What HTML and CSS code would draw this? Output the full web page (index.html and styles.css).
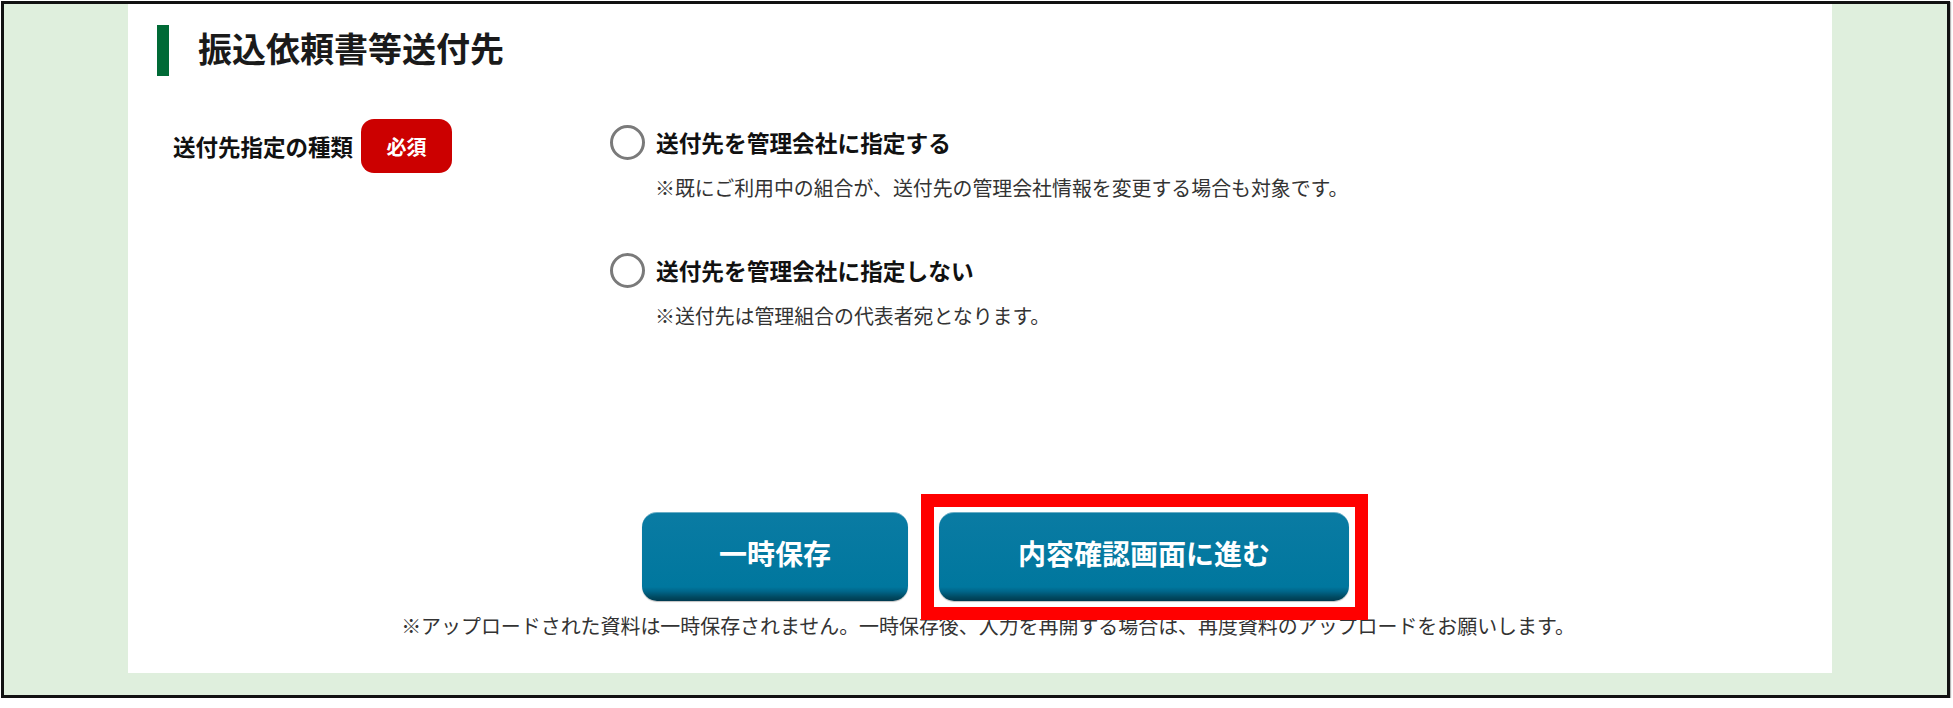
FILE: index.html
```html
<!DOCTYPE html>
<html lang="ja">
<head>
<meta charset="utf-8">
<title>振込依頼書等送付先</title>
<link rel="stylesheet" href="styles.css">
</head>
<body>
<div class="frame">
  <div class="panel">
    <h2 class="section-title"><span class="title-bar"></span><span class="title-text">振込依頼書等送付先</span></h2>

    <div class="form-row">
      <div class="field-label">
        <span class="label-text">送付先指定の種類</span>
        <span class="badge">必須</span>
      </div>
      <div class="options">
        <label class="option">
          <span class="radio"></span>
          <span class="option-text">送付先を管理会社に指定する</span>
        </label>
        <p class="option-note">※既にご利用中の組合が、送付先の管理会社情報を変更する場合も対象です。</p>
        <label class="option option-second">
          <span class="radio"></span>
          <span class="option-text">送付先を管理会社に指定しない</span>
        </label>
        <p class="option-note">※送付先は管理組合の代表者宛となります。</p>
      </div>
    </div>

    <div class="actions">
      <button class="btn btn-save" type="button">一時保存</button>
      <span class="highlight-wrap">
        <button class="btn btn-next" type="button">内容確認画面に進む</button>
        <span class="highlight"></span>
      </span>
    </div>
    <p class="footnote">※アップロードされた資料は一時保存されません。一時保存後、入力を再開する場合は、再度資料のアップロードをお願いします。</p>
  </div>
</div>
</body>
</html>
```

FILE: styles.css
```css
html, body {
  margin: 0;
  padding: 0;
  background: #ffffff;
}

body {
  font-family: "Noto Sans CJK JP", "Noto Sans", sans-serif;
  color: #1a1a1a;
}

.frame {
  box-sizing: border-box;
  margin: 1px 0 0 1px;
  width: 1949px;
  height: 697px;
  border: 3px solid #111;
  background: #dfefdd;
  box-shadow: 1px 1px 1px #b5b5b5;
  overflow: hidden;
}

.panel {
  box-sizing: border-box;
  margin-left: 124px;
  width: 1704px;
  height: 669px;
  background: #ffffff;
  padding-top: 21px;
}

.section-title {
  display: flex;
  align-items: center;
  margin: 0 0 0 29px;
  height: 51px;
  font-size: 34px;
  font-weight: 700;
  line-height: 51px;
  color: #1a1a1a;
}

.title-bar {
  width: 12px;
  height: 51px;
  background: #006a36;
  margin-right: 29px;
}

.title-text {
  position: relative;
  top: -3px;
}

.form-row {
  display: flex;
  margin-top: 43px;
  padding-left: 45px;
}

.field-label {
  display: flex;
  align-items: center;
  width: 437px;
  height: 54px;
}

.label-text {
  font-size: 22.5px;
  font-weight: 700;
  line-height: 1;
  color: #111;
}

.badge {
  display: flex;
  align-items: center;
  justify-content: center;
  box-sizing: border-box;
  width: 91px;
  height: 54px;
  margin-left: 8px;
  border-radius: 13px;
  background: #cc0000;
  color: #ffffff;
  font-size: 20px;
  font-weight: 700;
}

.options {
  padding-top: 6px;
}

.option {
  display: flex;
  align-items: center;
  height: 35px;
}

.option-second {
  margin-top: 51px;
}

.radio {
  box-sizing: border-box;
  width: 35px;
  height: 35px;
  border: 3px solid #7a7a7a;
  border-radius: 50%;
  background: #ffffff;
  margin-right: 11px;
  flex: none;
}

.option-text {
  font-size: 22.7px;
  font-weight: 700;
  line-height: 35px;
  color: #111;
}

.option-note {
  margin: 13px 0 0 45px;
  font-size: 19.9px;
  line-height: 29px;
  color: #333;
}

.actions {
  display: flex;
  justify-content: center;
  gap: 31px;
  margin-top: 182px;
  padding-left: 31px;
}

.btn {
  box-sizing: border-box;
  height: 89px;
  padding: 0 0 8px;
  border: none;
  border-top: 1px solid #6aaec6;
  border-radius: 15px;
  background: linear-gradient(to bottom, #0a7ba3 0%, #00779e 84%, #00668a 89%, #00485f 96%, #003a4f 100%);
  box-shadow: 0 1px 1px rgba(0, 0, 0, 0.25);
  color: #ffffff;
  font-family: "Noto Sans CJK JP", "Noto Sans", sans-serif;
  font-size: 28px;
  font-weight: 700;
  line-height: 1;
  cursor: pointer;
}

.btn-save {
  width: 266px;
}

.btn-next {
  width: 410px;
}

.highlight-wrap {
  position: relative;
  display: block;
}

.highlight {
  position: absolute;
  top: -18px;
  left: -18px;
  right: -19px;
  bottom: -19px;
  border: 13px solid #ff0000;
  pointer-events: none;
}

.footnote {
  margin: 11px 0 0;
  padding-left: 16px;
  text-align: center;
  font-size: 19.95px;
  line-height: 28px;
  color: #333;
}
```
